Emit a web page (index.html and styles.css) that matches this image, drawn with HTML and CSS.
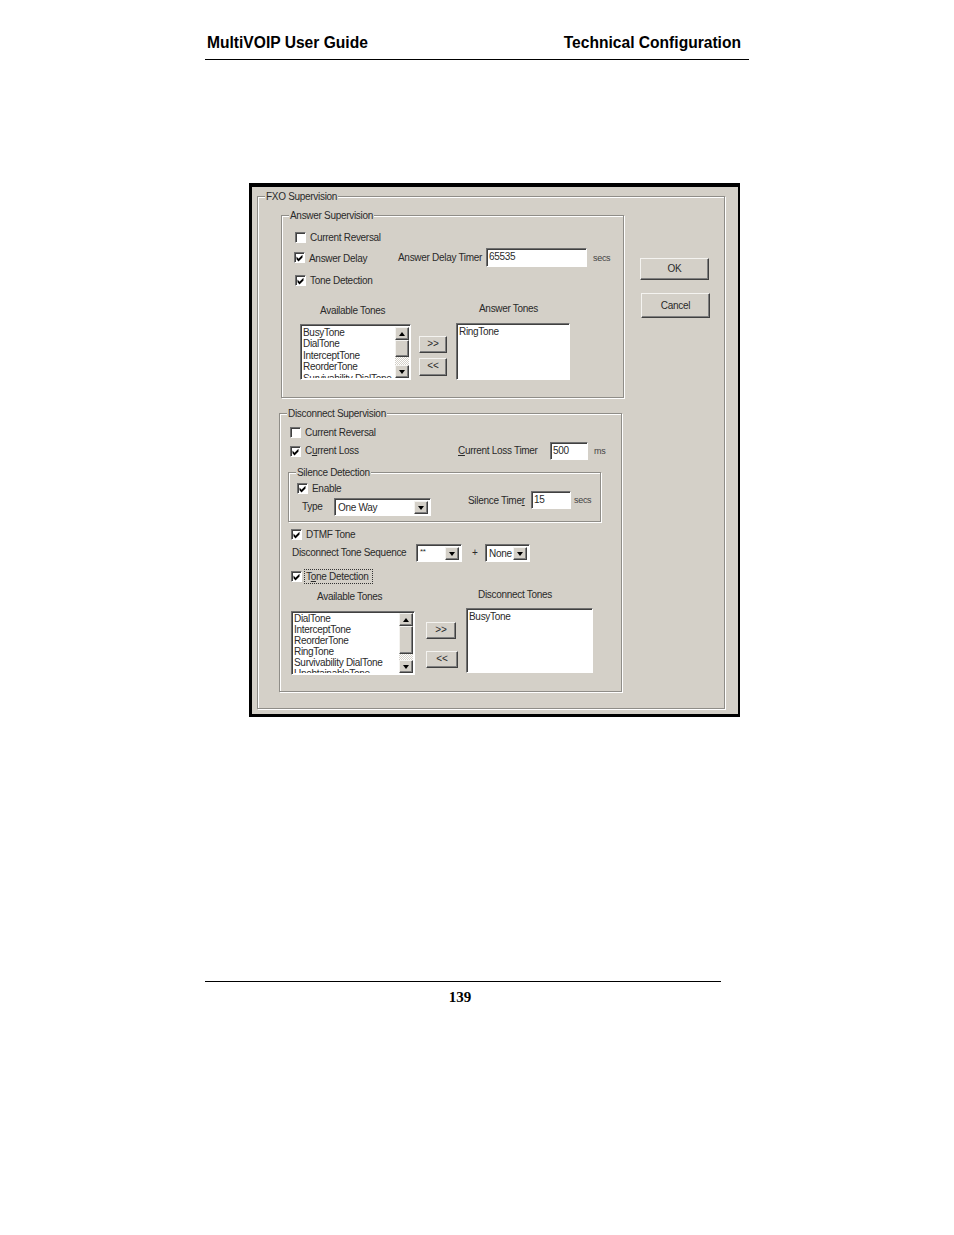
FILE: index.html
```html
<!DOCTYPE html>
<html lang="en">
<head>
  <meta charset="UTF-8">
  <title>MultiVOIP User Guide</title>
  <link rel="stylesheet" href="styles.css">
</head>
<body>

  <header class="page-header">
    <span>MultiVOIP User Guide</span>
    <span>Technical Configuration</span>
  </header>

  <div class="dialog">
    <div class="group fxo">
      <span class="group-title">FXO Supervision</span>

      <div class="left-col">
        <!-- Answer Supervision -->
        <div class="group answer">
          <span class="group-title">Answer Supervision</span>

          <div class="row r-ans1">
            <span class="check"></span><span class="lbl">Current Reversal</span>
          </div>
          <div class="row r-ans2">
            <span class="check on"><svg viewBox="0 0 9 9"><path d="M1.5 3.6l2 2.2 4-4v2.6l-4 4-2-2.2z"/></svg></span>
            <span class="lbl w-delay">Answer Delay</span>
            <span class="w-timer">Answer Delay Timer</span>
            <span class="field f-delay">65535</span>
            <span class="unit">secs</span>
          </div>
          <div class="row r-ans3">
            <span class="check on"><svg viewBox="0 0 9 9"><path d="M1.5 3.6l2 2.2 4-4v2.6l-4 4-2-2.2z"/></svg></span>
            <span class="lbl">Tone Detection</span>
          </div>

          <div class="titles r-ans-titles">
            <span class="t-avail">Available Tones</span>
            <span class="t-answer">Answer Tones</span>
          </div>

          <div class="lists r-ans-lists">
            <div class="listbox lb-avail">
              <div class="items">
                <div>BusyTone</div><div>DialTone</div><div>InterceptTone</div><div>ReorderTone</div><div>Survivability DialTone</div>
              </div>
              <div class="scroll">
                <span class="raised sb-btn"><i class="tri-up"></i></span>
                <span class="raised thumb th-a"></span>
                <span class="track"></span>
                <span class="raised sb-btn"><i class="tri-down"></i></span>
              </div>
            </div>
            <div class="arrows a-ans">
              <span class="raised arrow">&gt;&gt;</span>
              <span class="raised arrow">&lt;&lt;</span>
            </div>
            <div class="listbox lb-answer">
              <div class="items"><div>RingTone</div></div>
            </div>
          </div>
        </div>

        <!-- Disconnect Supervision -->
        <div class="group disconnect">
          <span class="group-title">Disconnect Supervision</span>

          <div class="row r-dis1">
            <span class="check"></span><span class="lbl">Current Reversal</span>
          </div>
          <div class="row r-dis2">
            <span class="check on"><svg viewBox="0 0 9 9"><path d="M1.5 3.6l2 2.2 4-4v2.6l-4 4-2-2.2z"/></svg></span>
            <span class="w-loss">C<u>u</u>rrent Loss</span>
            <span class="w-losstimer"><u>C</u>urrent Loss Timer</span>
            <span class="field f-loss">500</span>
            <span class="unit">ms</span>
          </div>

          <div class="group silence">
            <span class="group-title">Silence Detection</span>
            <div class="silence-left">
              <div class="row r-enable">
                <span class="check on"><svg viewBox="0 0 9 9"><path d="M1.5 3.6l2 2.2 4-4v2.6l-4 4-2-2.2z"/></svg></span>
                <span class="lbl">Enable</span>
              </div>
              <div class="row r-type">
                <span class="w-type">Type</span>
                <span class="select s-type"><span class="select-text">One Way</span><span class="raised sb-btn"><i class="tri-down"></i></span></span>
              </div>
            </div>
            <div class="row r-silence">
              <span class="lbl w-silence">Silence Time<u>r</u></span>
              <span class="field f-silence">15</span>
              <span class="unit">secs</span>
            </div>
          </div>

          <div class="row r-dtmf">
            <span class="check on"><svg viewBox="0 0 9 9"><path d="M1.5 3.6l2 2.2 4-4v2.6l-4 4-2-2.2z"/></svg></span>
            <span class="lbl">DTMF Tone</span>
          </div>
          <div class="row r-seq">
            <span class="w-seq">Disconnect Tone Sequence</span>
            <span class="select s-seq"><span class="select-text stars">**</span><span class="raised sb-btn"><i class="tri-down"></i></span></span>
            <span class="plus">+</span>
            <span class="select s-none"><span class="select-text">None</span><span class="raised sb-btn"><i class="tri-down"></i></span></span>
          </div>
          <div class="row r-tone">
            <span class="check on"><svg viewBox="0 0 9 9"><path d="M1.5 3.6l2 2.2 4-4v2.6l-4 4-2-2.2z"/></svg></span>
            <span class="focused">T<u>o</u>ne Detection</span>
          </div>

          <div class="titles r-dis-titles">
            <span class="t-avail2">Available Tones</span>
            <span class="t-disc">Disconnect Tones</span>
          </div>

          <div class="lists r-dis-lists">
            <div class="listbox lb-avail2">
              <div class="items">
                <div>DialTone</div><div>InterceptTone</div><div>ReorderTone</div><div>RingTone</div><div>Survivability DialTone</div><div>UnobtainableTone</div>
              </div>
              <div class="scroll">
                <span class="raised sb-btn"><i class="tri-up"></i></span>
                <span class="raised thumb th-b"></span>
                <span class="track"></span>
                <span class="raised sb-btn"><i class="tri-down"></i></span>
              </div>
            </div>
            <div class="arrows a-dis">
              <span class="raised arrow ar-1">&gt;&gt;</span>
              <span class="raised arrow ar-2">&lt;&lt;</span>
            </div>
            <div class="listbox lb-disc">
              <div class="items"><div>BusyTone</div></div>
            </div>
          </div>
        </div>
      </div>

      <div class="right-col">
        <span class="raised btn btn-ok">OK</span>
        <span class="raised btn btn-cancel">Cancel</span>
      </div>
    </div>
  </div>

  <footer class="page-footer">139</footer>

</body>
</html>
```

FILE: styles.css
```css
body {
  margin: 0;
  background: #fff;
  color: #000;
  font-family: "Liberation Sans", Arial, sans-serif;
}
.page-header {
  display: flex;
  justify-content: space-between;
  box-sizing: border-box;
  width: 544px;
  height: 60px;
  margin-left: 205px;
  padding: 33px 8px 0 2px;
  border-bottom: 1px solid #000;
  font-size: 15.6px;
  font-weight: bold;
  line-height: 19px;
}
.page-footer {
  box-sizing: border-box;
  width: 516px;
  margin: 264px 0 0 205px;
  padding: 6px 6px 0 0;
  border-top: 1px solid #000;
  font-family: "Liberation Serif", serif;
  font-size: 15px;
  font-weight: bold;
  line-height: 18px;
  text-align: center;
}

/* dialog */
.dialog {
  box-sizing: border-box;
  width: 491px;
  height: 534px;
  margin: 123px 0 0 249px;
  padding: 9px 0 0 5px;
  border: solid #000;
  border-width: 4px 2px 3px 3px;
  background: #d4d0c8;
  color: #2a2a2a;
  font-size: 10px;
  line-height: 14px;
  letter-spacing: -0.3px;
}
.group {
  position: relative;
  box-sizing: border-box;
  border: 1px solid #8f8d88;
  box-shadow: 1px 1px 0 #fff, inset 1px 1px 0 #fff;
}
.group-title {
  position: absolute;
  top: -7px;
  left: 7px;
  padding: 0 1px;
  background: #d4d0c8;
  white-space: nowrap;
}
.fxo {
  display: flex;
  width: 468px;
  height: 513px;
}
.answer {
  width: 343px;
  height: 183px;
  margin: 18px 0 0 23px;
}
.disconnect {
  width: 343px;
  height: 279px;
  margin: 15px 0 0 21px;
}
.silence {
  display: flex;
  width: 313px;
  height: 50px;
  margin: 12px 0 0 8px;
}
.right-col {
  display: flex;
  flex-direction: column;
  align-items: flex-start;
  margin: 61px 0 0 16px;
}

/* rows */
.row {
  display: flex;
  align-items: center;
  height: 14px;
  white-space: nowrap;
}
.lbl { padding-top: 2px; }
.r-ans1 { margin: 14px 0 0 13px; }
.r-ans2 { height: 19px; margin: 4px 0 0 12px; }
.r-ans3 { margin: 6px 0 0 13px; }
.r-dis1 { margin: 11px 0 0 10px; }
.r-dis2 { height: 18px; margin: 3px 0 0 10px; }
.r-enable { margin: 8px 0 0 8px; }
.r-type { height: 18px; margin: 3px 0 0 13px; }
.r-silence { height: 18px; margin-top: 18px; }
.r-dtmf { margin: 5px 0 0 11px; }
.r-seq { height: 18px; margin: 3px 0 0 12px; }
.r-tone { margin: 7px 0 0 11px; }
.silence-left { width: 179px; }

.w-delay { width: 89px; }
.w-timer { width: 88px; }
.w-loss { width: 153px; }
.w-losstimer { width: 92px; }
.w-type { width: 32px; }
.w-silence { width: 63px; }
.w-seq { width: 124px; }
.plus { width: 23px; padding-left: 10px; box-sizing: border-box; }
.unit { margin-left: 6px; font-size: 9px; color: #444; }
.focused { padding: 1px 0 0 1px; margin-left: -1px; width: 66px; outline: 1px dotted #333; line-height: 12px; }
u { text-underline-offset: 1px; }

.check {
  position: relative;
  flex: none;
  box-sizing: border-box;
  width: 11px;
  height: 11px;
  margin-right: 4px;
  border: 1px solid #fff;
  border-top-color: #707070;
  border-left-color: #707070;
  background: #fff;
  box-shadow: inset 1px 1px 0 #404040;
}
.check svg { display: block; width: 9px; height: 9px; }
.check path { fill: #000; }

.field {
  box-sizing: border-box;
  height: 100%;
  padding: 1px 0 0 2px;
  border: 1px solid #fff;
  border-top-color: #707070;
  border-left-color: #707070;
  background: #fff;
  box-shadow: inset 1px 1px 0 #404040;
  line-height: 13px;
}
.f-delay { width: 101px; }
.f-loss { width: 38px; }
.f-silence { width: 40px; margin-right: -3px; }

.select {
  display: flex;
  box-sizing: border-box;
  height: 18px;
  padding: 2px;
  border: 1px solid #fff;
  border-top-color: #707070;
  border-left-color: #707070;
  background: #fff;
  box-shadow: inset 1px 1px 0 #404040;
}
.select-text { flex: 1; padding-left: 1px; line-height: 14px; }
.stars { font-size: 8px; line-height: 9px; }
.s-type { width: 97px; }
.s-seq { width: 46px; }
.s-none { width: 45px; }

/* titles and lists */
.titles { display: flex; height: 14px; padding-top: 1px; box-sizing: border-box; }
.r-ans-titles { margin-top: 14px; }
.r-dis-titles { margin-top: 4px; }
.t-avail { margin: 2px 0 0 38px; width: 159px; }
.t-avail2 { margin: 2px 0 0 37px; width: 161px; }

.lists { display: flex; align-items: flex-start; }
.r-ans-lists { margin-top: 8px; }
.r-dis-lists { margin-top: 7px; }

.listbox {
  display: flex;
  box-sizing: border-box;
  padding: 2px 1px 1px 2px;
  border: 1px solid #fff;
  border-top-color: #707070;
  border-left-color: #707070;
  background: #fff;
  box-shadow: inset 1px 1px 0 #404040;
  overflow: hidden;
}
.items {
  flex: 1;
  min-width: 0;
  overflow: hidden;
  line-height: 11.4px;
  white-space: nowrap;
}
.lb-avail { width: 111px; height: 56px; margin: 1px 0 0 18px; }
.lb-answer { width: 114px; height: 57px; margin-left: 9px; }
.lb-avail2 { width: 124px; height: 64px; margin: 3px 0 0 11px; padding-top: 1px; }
.lb-avail2 .items { line-height: 11.1px; }
.lb-disc { width: 127px; height: 65px; margin-left: 8px; }

.raised {
  box-sizing: border-box;
  border: 1px solid #404040;
  border-top-color: #f4f3f0;
  border-left-color: #f4f3f0;
  background: #d4d0c8;
  box-shadow: inset -1px -1px 0 #808080;
}
.scroll {
  display: flex;
  flex-direction: column;
  flex: none;
  width: 14px;
}
.sb-btn {
  display: flex;
  flex: none;
  align-items: center;
  justify-content: center;
  width: 14px;
  height: 13px;
}
.thumb { flex: none; width: 14px; }
.th-a { height: 17px; }
.th-b { height: 28px; }
.track {
  flex: 1;
  background: repeating-conic-gradient(#d4d0c8 0 25%, #fff 0 50%) 0 0 / 2px 2px;
}
.tri-up, .tri-down {
  width: 0;
  height: 0;
  border-left: 3px solid transparent;
  border-right: 3px solid transparent;
}
.tri-up { border-bottom: 4px solid #000; }
.tri-down { border-top: 4px solid #000; }

.arrows { display: flex; flex-direction: column; align-items: flex-start; }
.a-ans { gap: 5px; width: 28px; margin: 13px 0 0 8px; }
.a-dis { gap: 12px; width: 32px; margin: 14px 0 0 11px; }
.arrow {
  width: 28px;
  height: 17px;
  font-size: 10px;
  letter-spacing: 0;
  line-height: 14px;
  text-align: center;
}
.a-ans .arrow + .arrow { height: 18px; }
.ar-1 { width: 30px; }
.ar-2 { width: 32px; }

.btn { text-align: center; }
.btn-ok { width: 69px; height: 22px; line-height: 20px; }
.btn-cancel { width: 69px; height: 25px; margin: 13px 0 0 1px; line-height: 23px; }
```
